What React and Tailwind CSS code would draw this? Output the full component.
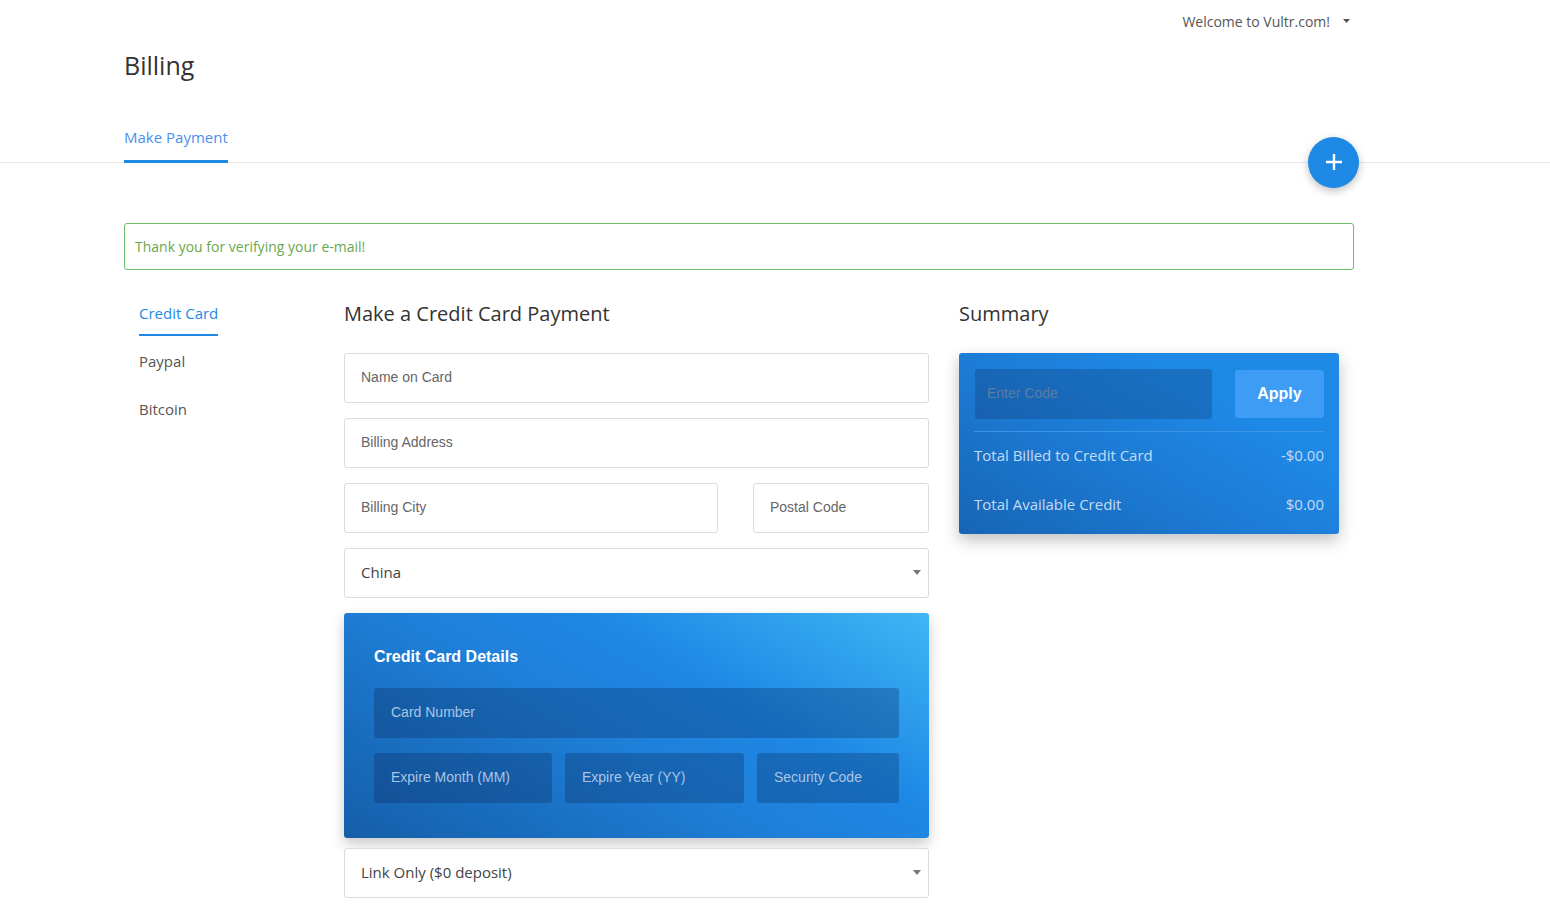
import React from 'react';

const RALE = { fontFamily: '"Open Sans", Lato, sans-serif' };

function Field({ placeholder, className = '' }) {
  return (
    <div
      className={`h-[50px] border border-[#dcdcdc] rounded-[3px] bg-white flex items-center px-4 text-[14px] text-[#666] font-['Liberation_Sans',Arial,sans-serif] ${className}`}
    >
      {placeholder}
    </div>
  );
}

function Select({ value }) {
  return (
    <div className="h-[50px] border border-[#dcdcdc] rounded-[3px] bg-white flex items-center justify-between pl-4 pr-[7px] text-[15px] text-[#444]" style={RALE}>
      <span>{value}</span>
      <svg width="8" height="5" viewBox="0 0 8 5"><path d="M0 0h8L4 5z" fill="#777" /></svg>
    </div>
  );
}

function DarkField({ placeholder, className = '' }) {
  return (
    <div className={`h-[50px] rounded-[3px] bg-[rgba(10,40,90,0.3)] flex items-center px-[17px] text-[14px] text-[#a9c6e6] font-['Liberation_Sans',Arial,sans-serif] ${className}`}>
      {placeholder}
    </div>
  );
}

export default function App() {
  return (
    <div className="min-h-[909px] bg-white text-[#333]" style={RALE}>
      {/* top bar */}
      <div className="w-[1230px] ml-[124px] flex justify-end items-center h-[42px] pr-[4px]">
        <span className="text-[14px] text-[#555]">Welcome to Vultr.com!</span>
        <svg className="ml-[13px]" width="7" height="4" viewBox="0 0 7 4"><path d="M0 0h7L3.5 4z" fill="#555" /></svg>
      </div>

      <div className="w-[1230px] ml-[124px]">
        <h1 className="text-[25px] text-[#333] leading-none mt-[11px]">Billing</h1>
      </div>

      {/* tabs */}
      <div className="relative mt-[48px] border-b border-[#e8e8e8]">
        <div className="w-[1230px] ml-[124px] flex">
          <div className="pb-[11px] border-b-[3px] border-[#1e88e5] text-[15px] text-[#4b8ff0] -mb-[1px]">Make Payment</div>
        </div>
        <button className="absolute left-[1308px] bottom-[-26px] w-[51px] h-[51px] rounded-full bg-[#1e88e5] shadow-[0_3px_8px_rgba(0,0,0,0.25)] flex items-center justify-center">
          <svg width="18" height="18" viewBox="0 0 18 18"><path d="M9 1v16M1 9h16" stroke="white" strokeWidth="2.4" /></svg>
        </button>
      </div>

      <div className="w-[1230px] ml-[124px] mt-[60px]">
        <div className="h-[47px] border border-[#6abf69] rounded-[3px] flex items-center px-[10px] text-[14px] text-[#6aa84f]">
          Thank you for verifying your e-mail!
        </div>

        <div className="grid grid-cols-[205px_615px_410px] mt-[30px]">
          {/* left nav */}
          <div className="px-[15px] text-[15px]">
            <div className="inline-block text-[#1e88e5] pb-[10px] border-b-[2px] border-[#1e88e5] mt-[2px]">Credit Card</div>
            <div className="text-[#555] mt-[14px]">Paypal</div>
            <div className="text-[#555] mt-[25px]">Bitcoin</div>
          </div>

          {/* middle */}
          <div className="px-[15px]">
            <h2 className="text-[20px] text-[#333] leading-none mt-[4px]">Make a Credit Card Payment</h2>
            <div className="mt-[29px] flex flex-col gap-[15px]">
              <Field placeholder="Name on Card" />
              <Field placeholder="Billing Address" />
              <div className="flex gap-[35px]">
                <Field placeholder="Billing City" className="w-[374px]" />
                <Field placeholder="Postal Code" className="flex-1" />
              </div>
              <Select value="China" />
              <div className="h-[225px] rounded-[3px] bg-[linear-gradient(30deg,#155ea9_0%,#1e7fd8_45%,#1e88e5_65%,#3fb6f4_100%)] shadow-[0_6px_14px_rgba(0,0,0,0.22)] px-[30px] pt-[32px] -mb-[5px]">
                <div className="text-[16px] font-bold text-white font-['Liberation_Sans',Arial,sans-serif]">Credit Card Details</div>
                <DarkField placeholder="Card Number" className="mt-[19px]" />
                <div className="flex gap-[13px] mt-[15px]">
                  <DarkField placeholder="Expire Month (MM)" className="w-[178px]" />
                  <DarkField placeholder="Expire Year (YY)" className="w-[179px]" />
                  <DarkField placeholder="Security Code" className="flex-1" />
                </div>
              </div>
              <Select value="Link Only ($0 deposit)" />
            </div>
          </div>

          {/* summary */}
          <div className="px-[15px]">
            <h2 className="text-[20px] text-[#333] leading-none mt-[4px]">Summary</h2>
            <div className="mt-[29px] h-[181px] rounded-[3px] bg-[linear-gradient(30deg,#1765b5_0%,#1c7ad3_40%,#1e88e5_70%,#1f89e6_100%)] shadow-[0_6px_16px_rgba(0,0,0,0.25)] px-[15px] pt-[16px]">
              <div className="flex items-center justify-between pl-[1px]">
                <div className="w-[237px] h-[50px] rounded-[3px] bg-[rgba(10,40,90,0.25)] flex items-center px-[12px] text-[14px] text-[#5d7da0] font-['Liberation_Sans',Arial,sans-serif]">Enter Code</div>
                <button className="w-[89px] h-[48px] rounded-[3px] bg-[#3d9df5] text-white text-[16px] font-bold font-['Liberation_Sans',Arial,sans-serif]">Apply</button>
              </div>
              <div className="border-t border-[#3b95e6] mt-[12px]" />
              <div className="flex justify-between text-[15px] text-[#c3dbf4] mt-[12px]">
                <span>Total Billed to Credit Card</span>
                <span>-$0.00</span>
              </div>
              <div className="flex justify-between text-[15px] text-[#c3dbf4] mt-[27px]">
                <span>Total Available Credit</span>
                <span>$0.00</span>
              </div>
            </div>
          </div>
        </div>
      </div>
    </div>
  );
}
